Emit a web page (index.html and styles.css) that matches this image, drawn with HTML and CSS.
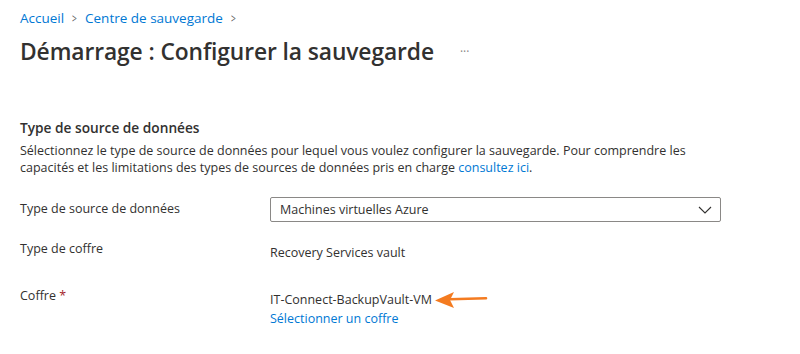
FILE: index.html
```html
<!DOCTYPE html>
<html lang="fr">

<head>
    <meta charset="UTF-8">
    <title>Configurer la sauvegarde</title>
    <link rel="stylesheet" href="styles.css">
</head>

<body>
    <nav class="fil">
        <a href="#">Accueil</a>
        <span class="sep">&gt;</span>
        <a href="#">Centre de sauvegarde</a>
        <span class="sep">&gt;</span>
    </nav>

    <div class="entete">
        <h1>Démarrage : Configurer la sauvegarde</h1>
        <span class="plus">···</span>
    </div>

    <section class="bloc">
        <h2>Type de source de données</h2>
        <p class="desc">Sélectionnez le type de source de données pour lequel vous voulez configurer la sauvegarde. Pour comprendre les capacités et les limitations des types de sources de données pris en charge <a href="#">consultez ici</a>.</p>

        <div class="ligne">
            <div class="label">Type de source de données</div>
            <div class="liste">
                <span>Machines virtuelles Azure</span>
                <svg width="14" height="8" viewBox="0 0 14 8"><path d="M1 1l6 6 6-6" fill="none" stroke="#323130" stroke-width="1.1"/></svg>
            </div>
        </div>

        <div class="ligne">
            <div class="label">Type de coffre</div>
            <div class="valeur">Recovery Services vault</div>
        </div>

        <div class="ligne">
            <div class="label">Coffre <span class="requis">*</span></div>
            <div class="valeur">
                <div class="coffre">IT-Connect-BackupVault-VM
                    <svg class="fleche" width="54" height="18" viewBox="0 0 54 18"><path d="M16 8.2L52 7.2" stroke="#f47b20" stroke-width="2.6" stroke-linecap="round"/><path d="M1 9.5L20 1L16 9L20 17Z" fill="#f47b20"/></svg>
                </div>
                <a href="#">Sélectionner un coffre</a>
            </div>
        </div>
    </section>
</body>

</html>
```

FILE: styles.css
```css
body {
    margin: 0;
    padding: 0 20px;
    font-family: "Open Sans", "Noto Sans", sans-serif;
    font-size: 12.5px;
    color: #323130;
    background: #fff;
}

a {
    color: #0078d4;
    text-decoration: none;
}

.fil {
    display: flex;
    align-items: center;
    gap: 7px;
    padding-top: 8px;
    height: 20px;
    font-size: 13.5px;
}

.sep {
    color: #605e5c;
    font-size: 12px;
    transform: scaleX(0.7);
}

.entete {
    display: flex;
    align-items: center;
    margin-top: 10px;
    height: 26px;
}

h1 {
    margin: 0;
    font-size: 22.8px;
    font-weight: 600;
    letter-spacing: -0.1px;
}

.plus {
    margin-left: 26px;
    color: #8a8886;
    font-size: 12px;
}

.bloc {
    margin-top: 54px;
}

h2 {
    margin: 0;
    font-size: 13.7px;
    font-weight: 600;
    line-height: 20px;
}

.desc {
    margin: 4px 0 0;
    line-height: 17px;
    max-width: 700px;
}

.ligne {
    display: grid;
    grid-template-columns: 250px 451px;
    margin-top: 21px;
}

.ligne + .ligne {
    margin-top: 15px;
}

.ligne:last-child {
    margin-top: 22px;
}

.label {
    line-height: 24px;
}

.requis {
    color: #a4262c;
}

.liste {
    display: flex;
    justify-content: space-between;
    align-items: center;
    height: 23px;
    padding: 0 8px 0 9px;
    border: 1px solid #8a8886;
    border-radius: 2px;
}

.valeur {
    padding-top: 6px;
    line-height: 19px;
}

.coffre {
    display: flex;
    align-items: center;
    gap: 2px;
}
```
